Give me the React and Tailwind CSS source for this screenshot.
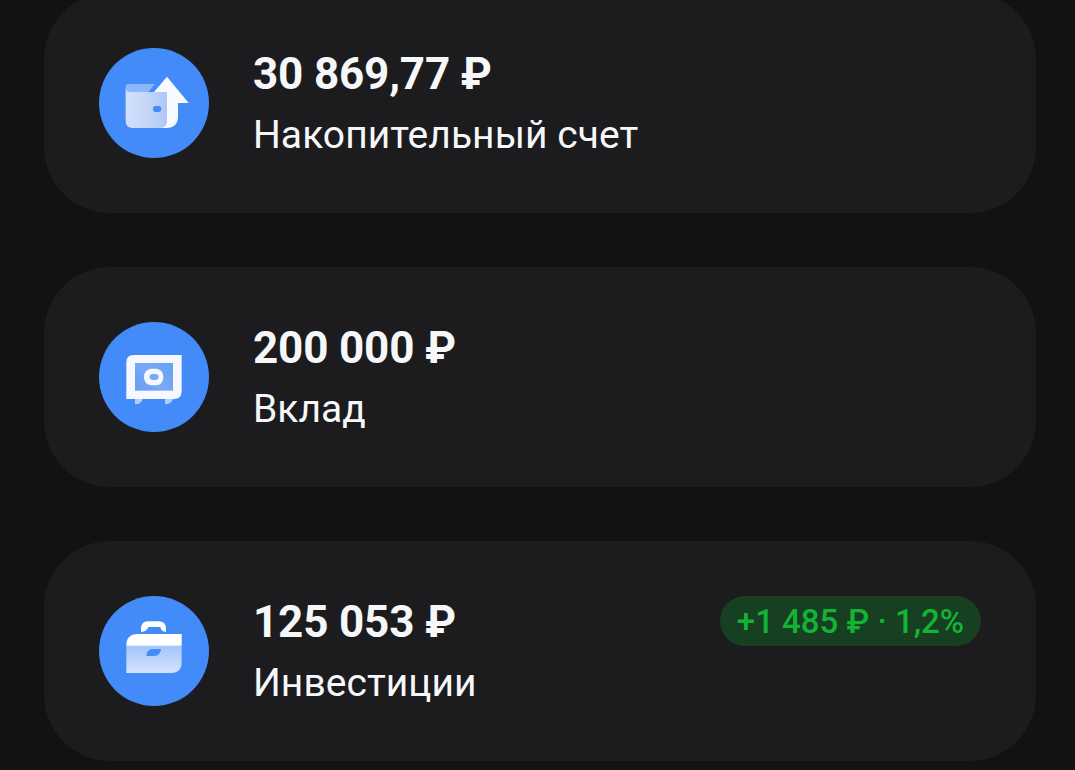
import React from 'react';

const WalletIcon = () => (
  <svg viewBox="0 0 330 330" className="w-full h-full">
    <defs>
      <linearGradient id="wallet-body" x1="80" y1="0" x2="206" y2="0" gradientUnits="userSpaceOnUse">
        <stop offset="0" stopColor="#d3e0fb" />
        <stop offset="0.5" stopColor="#c5d6f8" />
        <stop offset="1" stopColor="#acc6f6" />
      </linearGradient>
    </defs>
    <path d="M204 86 L269 165 H237 V204 Q237 240 202 240 H175 V132 H165 Z" fill="#f7faff" />
    <path d="M80 124 V118 Q80 108 91 108 H168 L148 132 V140 H90 Z" fill="#8cb7fb" />
    <path d="M80 120 Q81 132 95 132 H204 V219 Q204 240 183 240 H101 Q80 240 80 219 Z" fill="url(#wallet-body)" />
    <path d="M170 174 H179 Q187 175 187 183 Q187 191 179 192 H170 Q162 191 162 183 Q162 175 170 174 Z" fill="#428bf9" />
  </svg>
);

const SafeIcon = () => (
  <svg viewBox="0 0 330 330" className="w-full h-full">
    <defs>
      <linearGradient id="safe-door" x1="108" y1="205" x2="222" y2="123" gradientUnits="userSpaceOnUse">
        <stop offset="0" stopColor="#659ff5" />
        <stop offset="0.5" stopColor="#7aaaf3" />
        <stop offset="1" stopColor="#669ff6" />
      </linearGradient>
    </defs>
    <path d="M108 228 H131 Q129 247 108 247 Z" fill="#b1cdfb" />
    <path d="M198 228 H223 Q218 247 198 247 Z" fill="#b1cdfb" />
    <path d="M82 231 V121 Q82 99 104 99 H248 V207 Q248 231 225 231 Z" fill="#f5f9ff" />
    <rect x="108" y="123" width="114" height="83" fill="url(#safe-door)" />
    <path
      fillRule="evenodd"
      d="M157 140 H172 Q193 143 193 165 Q193 187 172 190 H157 Q135 187 135 165 Q135 143 157 140 Z M160 156 Q151 157 151 165 Q152 173 162 174 H169 Q179 173 179 165 Q179 157 170 156 Z"
      fill="#f5f9ff"
    />
  </svg>
);

const BriefcaseIcon = () => (
  <svg viewBox="0 0 330 330" className="w-full h-full">
    <defs>
      <linearGradient id="case-body" x1="0" y1="149" x2="0" y2="231" gradientUnits="userSpaceOnUse">
        <stop offset="0" stopColor="#a3c3fa" />
        <stop offset="1" stopColor="#d6e3fd" />
      </linearGradient>
    </defs>
    <path d="M126 108 V96 Q128 76 146 76 H182 Q200 78 201 96 V108 Q186 107 184 93 H148 Q144 107 126 108 Z" fill="#fff" />
    <path d="M82 148 H248 V198 Q248 231 216 231 H82 Z" fill="url(#case-body)" />
    <path d="M82 149 Q82 114 116 114 H248 V149 Z" fill="#fff" />
    <path d="M160 159 H186 Q184 180 165 180 H142 Q144 160 160 159 Z" fill="#428bf9" />
  </svg>
);

const accounts = [
  { id: 'savings', amount: '30 869,77 ₽', title: 'Накопительный счет', icon: WalletIcon },
  { id: 'deposit', amount: '200 000 ₽', title: 'Вклад', icon: SafeIcon },
  { id: 'invest', amount: '125 053 ₽', title: 'Инвестиции', icon: BriefcaseIcon, profit: '+1 485 ₽ · 1,2%' }
];

const AccountCard = ({ account }) => {
  const Icon = account.icon;

  return (
    <div className="flex h-[220px] shrink-0 items-start rounded-[66px] bg-[#1c1c1e] p-[55px]">
      <div className="w-[110px] h-[110px] shrink-0 rounded-full bg-[#428bf9]">
        <Icon />
      </div>
      <div className="ml-11 flex flex-col gap-3 whitespace-nowrap text-[#f6f7f9]">
        <div className="text-[44px] leading-[52px] font-bold tracking-[-0.16px]">{account.amount}</div>
        <div className="text-[39px] leading-[46px] tracking-[0.05px]">{account.title}</div>
      </div>
      {account.profit && (
        <div className="ml-auto flex h-[50px] w-[261px] items-center justify-center rounded-full bg-[#173f22] pt-0.5 text-[33px] font-medium whitespace-nowrap text-[#13b336]">
          {account.profit}
        </div>
      )}
    </div>
  );
};

const App = () => {
  return (
    <div className="h-[770px] w-[1075px] overflow-hidden bg-[#121212] font-['Roboto',sans-serif]">
      {/* The list is scrolled a little, so the first card is cut at the top */}
      <div className="-mt-[7px] ml-11 flex w-[992px] flex-col gap-[54px]">
        {accounts.map(account => (
          <AccountCard key={account.id} account={account} />
        ))}
      </div>
    </div>
  );
};

export default App;
